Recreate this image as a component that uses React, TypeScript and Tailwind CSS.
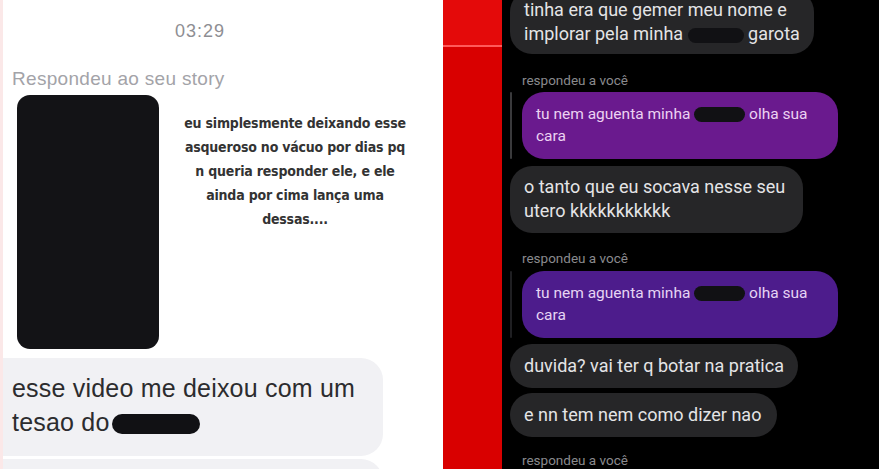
import React from "react";

const Blob = ({ w, h, cls = "" }: { w: string; h: string; cls?: string }) => (
  <span className={`inline-block align-middle rounded-full bg-[#111114] ${w} ${h} ${cls}`} />
);

export default function App() {
  return (
    <div className="flex h-[469px] w-[879px] overflow-hidden">
      {/* Left panel */}
      <div className="relative w-[443px] shrink-0 bg-white border-l-[3px] border-[#fbe8e8] font-['Liberation_Sans',sans-serif]">
        <div className="pt-[20px] pl-[172px] text-[18px] leading-[22px] text-[#8e8e93] tracking-[1px]">03:29</div>
        <div className="mt-[26px] pl-[9px] text-[19px] leading-[22px] text-[#a3a3a8] tracking-[0.3px]">Respondeu ao seu story</div>
        <div className="mt-[5px] flex">
          <div className="ml-[14px] h-[254px] w-[142px] rounded-[13px] bg-[#131316]" />
          <div className="ml-[24px] mt-[16px] w-[224px] text-center font-['DejaVu_Sans_Condensed','DejaVu_Sans',sans-serif] font-bold text-[14px] leading-[24px] text-[#333] tracking-[-0.2px]">
            eu simplesmente deixando esse<br />
            asqueroso no vácuo por dias pq<br />
            n queria responder ele, e ele<br />
            ainda por cima lança uma<br />
            dessas....
          </div>
        </div>
        <div className="mt-[9px] w-[380px] rounded-r-[22px] bg-[#f1f1f4] pl-[9px] pt-[13px] pb-[17px] text-[25px] leading-[34px] text-[#2c2c2e] tracking-[0.2px] whitespace-nowrap">
          esse video me deixou com um<br />
          tesao do<Blob w="w-[88px]" h="h-[20px]" cls="ml-[2px] rounded-[9px]" />
        </div>
        <div className="mt-[3px] h-[30px] w-[380px] rounded-tr-[22px] bg-[#f1f1f4]" />
      </div>

      {/* Red strip */}
      <div className="w-[59px] shrink-0 flex flex-col">
        <div className="h-[45px] bg-[#e40a0a]" />
        <div className="h-[2px] bg-[#ff5a5a]" />
        <div className="flex-1 bg-[#d90000]" />
      </div>

      {/* Right panel */}
      <div className="flex-1 bg-black pl-[8px] font-['Roboto',sans-serif] text-[18px] whitespace-nowrap">
        <div className="-mt-[10px] w-fit rounded-[22px] bg-[#262628] pl-[14px] pr-[14px] pt-[8px] pb-[8px] leading-[24px] text-[#e4e4e6]">
          tinha era que gemer meu nome e<br />
          implorar pela minha <Blob w="w-[56px]" h="h-[15px]" cls="rounded-[6px] bg-[#1c1c1e]" /> garota
        </div>

        <div className="mt-[18px] pl-[12px] text-[13.5px] leading-[16px] text-[#8a8a8e]">respondeu a você</div>
        <div className="mt-[4px] flex">
          <div className="w-[2px] bg-[#3a3a3c] rounded" />
          <div className="ml-[10px] w-[316px] rounded-[22px] bg-[#6a1a8e] px-[14px] pt-[11px] pb-[12px] text-[15.5px] leading-[22px] text-[#ecd2f2]">
            tu nem aguenta minha <Blob w="w-[51px]" h="h-[15px]" cls="rounded-[6px] bg-[#1e1222]" /> olha sua<br />
            cara
          </div>
        </div>

        <div className="mt-[7px] w-fit rounded-[22px] bg-[#262628] pl-[14px] pr-[18px] pt-[9px] pb-[10px] leading-[24px] text-[#e4e4e6]">
          o tanto que eu socava nesse seu<br />
          utero kkkkkkkkkkk
        </div>

        <div className="mt-[17px] pl-[12px] text-[13.5px] leading-[16px] text-[#8a8a8e]">respondeu a você</div>
        <div className="mt-[5px] flex">
          <div className="w-[2px] bg-[#1f1f22] rounded" />
          <div className="ml-[10px] w-[316px] rounded-[22px] bg-[#4d1c8c] px-[14px] pt-[11px] pb-[12px] text-[15.5px] leading-[22px] text-[#e6d4f4]">
            tu nem aguenta minha <Blob w="w-[51px]" h="h-[15px]" cls="rounded-[6px] bg-[#1a1222]" /> olha sua<br />
            cara
          </div>
        </div>

        <div className="mt-[6px] w-fit rounded-[22px] bg-[#262628] pl-[14px] pr-[14px] py-[10px] leading-[24px] text-[#e4e4e6]">
          duvida? vai ter q botar na pratica
        </div>
        <div className="mt-[5px] w-fit rounded-[22px] bg-[#262628] pl-[14px] pr-[16px] py-[10px] leading-[24px] text-[#e4e4e6]">
          e nn tem nem como dizer nao
        </div>

        <div className="mt-[15px] pl-[12px] text-[13.5px] leading-[16px] text-[#8a8a8e]">respondeu a você</div>
      </div>
    </div>
  );
}
